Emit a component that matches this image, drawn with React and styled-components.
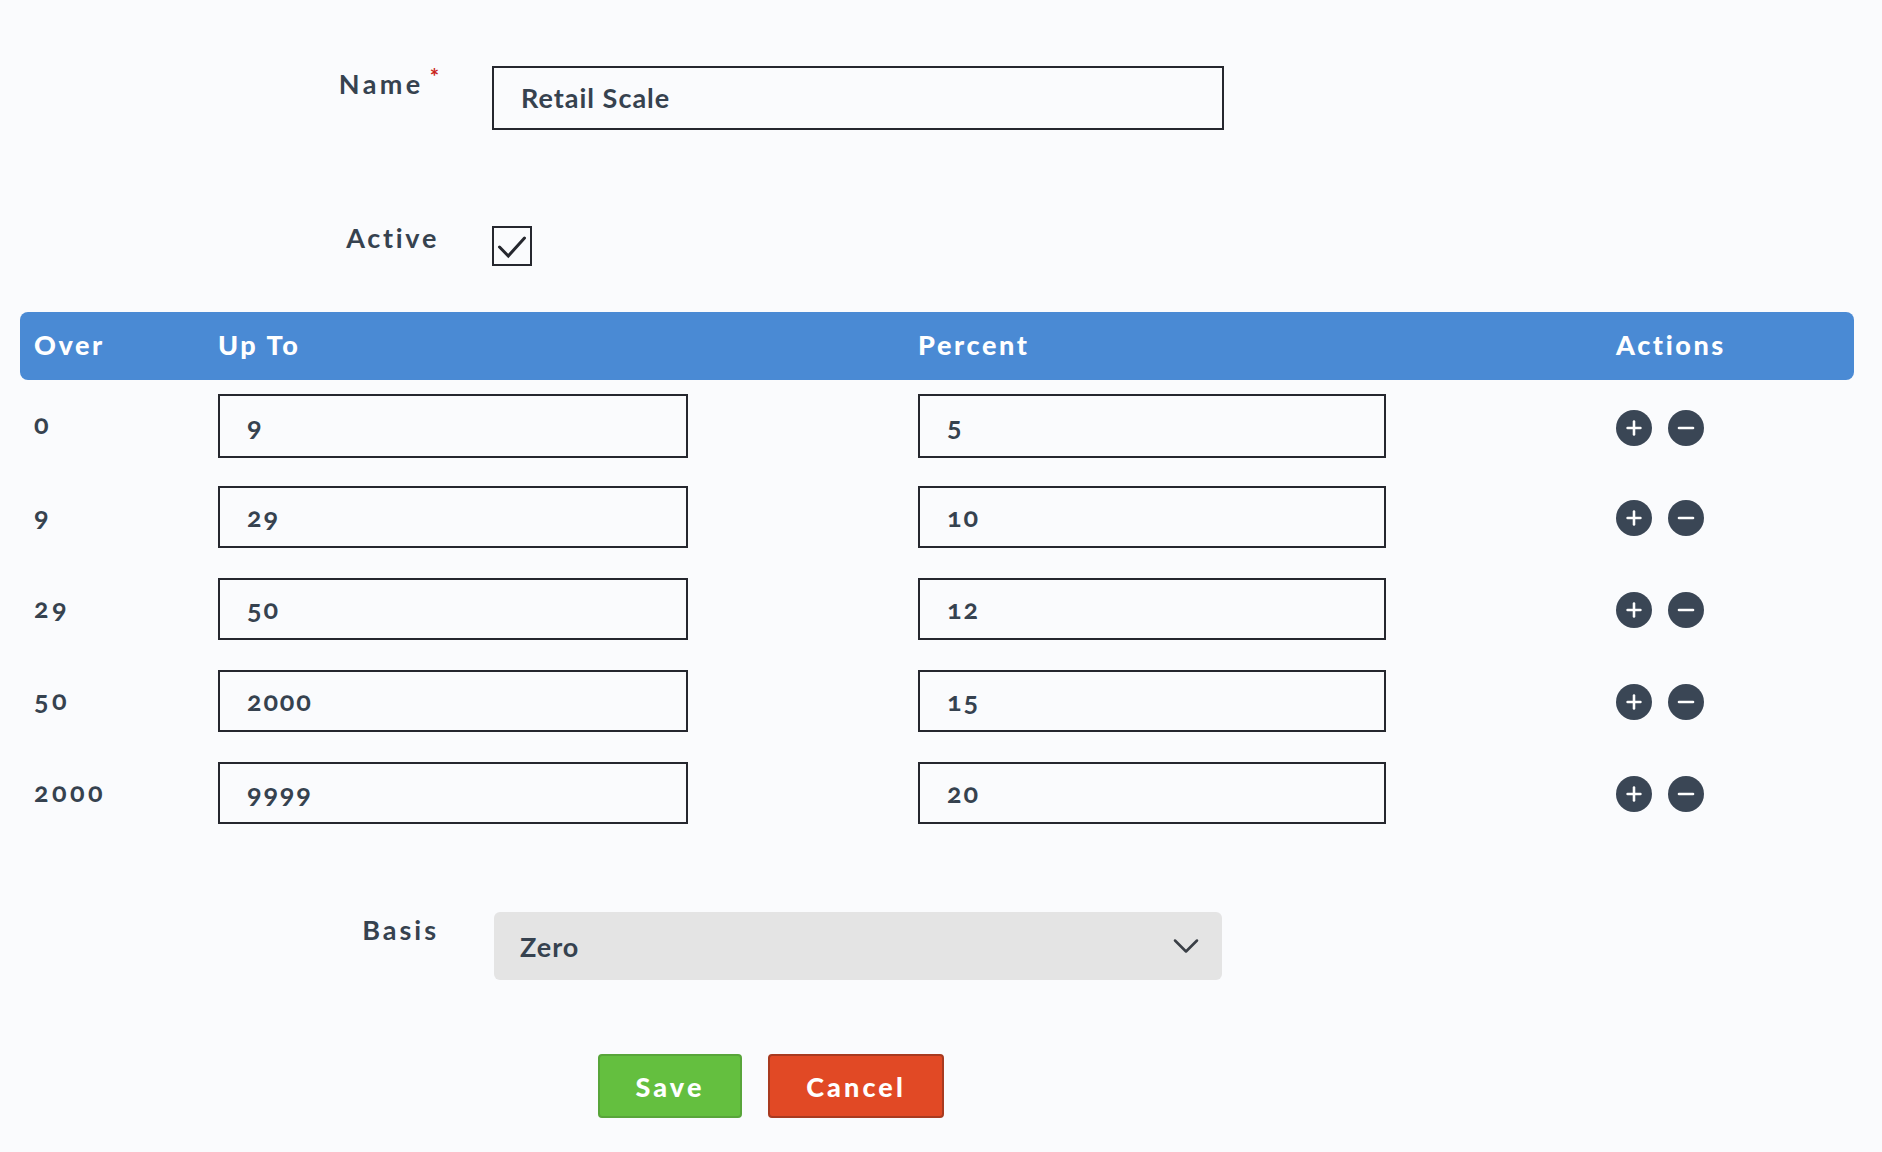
import React from 'react';
import styled, { createGlobalStyle } from 'styled-components';
import { Plus, Minus, ChevronDown } from 'lucide-react';

const Global = createGlobalStyle`
  html, body { margin: 0; background: #fafbfd; }
  body { font-family: "Lato", "Open Sans", sans-serif; color: #36424f; font-variant-numeric: oldstyle-nums; }
`;
const Page = styled.div`
  width: 1882px; height: 1152px; box-sizing: border-box; padding: 66px 28px 0 20px;
`;
const FormRow = styled.div`
  display: grid; grid-template-columns: 419px 1fr; column-gap: 53px; margin-bottom: ${p => p.$mb}px;
`;
const Label = styled.label`
  justify-self: end; font-size: 27px; font-weight: 700; letter-spacing: ${p => p.$ls}px; line-height: 32px; margin-top: ${p => p.$mt || 0}px; white-space: nowrap;
`;
const Req = styled.sup`
  color: #c9251a; font-size: 22px; font-weight: 700; margin-left: 6px; line-height: 0; vertical-align: 9px; letter-spacing: 0;
`;
const TextInput = styled.div`
  box-sizing: border-box; width: ${p => p.$w}px; height: ${p => p.$h || 64}px; border: 2px solid #25272e; background: #fafbfd;
  display: flex; align-items: center; padding: 0 0 2px 27px; font-size: 27px; font-weight: 700; color: #36424f;
  letter-spacing: ${p => p.$ls || 1}px; margin-top: ${p => p.$mt || 0}px;
`;
const CheckBox = styled.div`
  box-sizing: border-box; width: 40px; height: 40px; border: 2px solid #25272e; color: #25272e;
`;
const CheckMark = styled.svg`
  display: block; width: 36px; height: 36px;
`;
const Header = styled.div`
  display: grid; grid-template-columns: 184px 700px 698px 1fr; height: 68px; align-items: center;
  background: #4a8ad4; border-radius: 8px; color: #fff; font-size: 27px; font-weight: 900; letter-spacing: 2.6px;
`;
const HeadCell = styled.div` padding-left: 14px; margin-top: -4px; `;
const Row = styled.div`
  display: grid; grid-template-columns: 184px 700px 698px 1fr; height: 92px; align-items: center;
`;
const Over = styled.div` padding-left: 14px; font-size: 27px; font-weight: 700; letter-spacing: 3.4px; margin-top: -6px; `;
const Cell = styled.div` padding-left: 14px; `;
const Actions = styled.div` display: flex; gap: 16px; padding-left: 14px; margin-top: ${p => p.$mt}px; `;
const Round = styled.span`
  width: 36px; height: 36px; border-radius: 50%; background: #3a4655; color: #fff; display: flex; align-items: center; justify-content: center;
`;
const Rows = styled.div` margin-bottom: 72px; `;
const Select = styled.div`
  box-sizing: border-box; width: 728px; height: 68px; margin-left: 2px; background: #e4e4e4; border-radius: 6px;
  display: flex; align-items: center; justify-content: space-between; padding: 0 14px 0 26px; font-size: 27px; font-weight: 700; letter-spacing: 1px;
`;
const Buttons = styled.div` display: flex; gap: 26px; padding-left: 578px; `;
const Btn = styled.button`
  box-sizing: border-box; height: 64px; width: ${p => p.$w}px; border-radius: 4px; color: #fff; font: 900 27px "Lato", sans-serif; letter-spacing: 3.1px;
  background: ${p => p.$bg}; border: 2px solid ${p => p.$bd};
`;

const data = [[0, 9, 5], [9, 29, 10], [29, 50, 12], [50, 2000, 15], [2000, 9999, 20]];

export default function App() {
  return (
    <Page>
      <Global />
      <FormRow $mb={96}>
        <Label $mt={2} $ls={3.4}>Name<Req>*</Req></Label>
        <TextInput $w={732}>Retail Scale</TextInput>
      </FormRow>
      <FormRow $mb={46}>
        <Label $mt={-4} $ls={2.7}>Active</Label>
        <CheckBox>
          <CheckMark viewBox="0 0 36 36" fill="none" stroke="currentColor" strokeWidth="3" strokeLinecap="round" strokeLinejoin="miter">
            <path d="M5.5 19 L14.3 28 L30.5 10" />
          </CheckMark>
        </CheckBox>
      </FormRow>
      <Header>
        <HeadCell>Over</HeadCell>
        <HeadCell>Up To</HeadCell>
        <HeadCell>Percent</HeadCell>
        <HeadCell>Actions</HeadCell>
      </Header>
      <Rows>
        {data.map(([a, b, c], i) => (
          <Row key={a}>
            <Over>{a}</Over>
            <Cell><TextInput $w={470} $h={i === 0 ? 64 : 62} $ls={1.8} $mt={i === 0 ? 0 : -2}>{b}</TextInput></Cell>
            <Cell><TextInput $w={468} $h={i === 0 ? 64 : 62} $ls={1.8} $mt={i === 0 ? 0 : -2}>{c}</TextInput></Cell>
            <Actions $mt={i === 0 ? 4 : 0}>
              <Round><Plus size={22} strokeWidth={2.8} /></Round>
              <Round><Minus size={24} strokeWidth={2.6} /></Round>
            </Actions>
          </Row>
        ))}
      </Rows>
      <FormRow $mb={74}>
        <Label $mt={2} $ls={3}>Basis</Label>
        <Select>Zero<ChevronDown size={44} strokeWidth={1.4} color="#3a3f46" /></Select>
      </FormRow>
      <Buttons>
        <Btn $w={144} $bg="#64bf3f" $bd="#58a53a">Save</Btn>
        <Btn $w={176} $bg="#e14925" $bd="#a83a20">Cancel</Btn>
      </Buttons>
    </Page>
  );
}
